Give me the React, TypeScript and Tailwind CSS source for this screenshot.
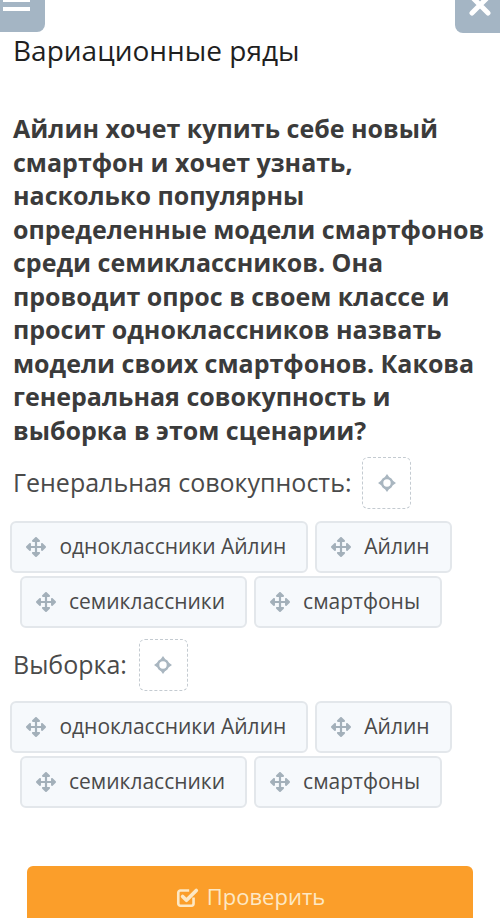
import { FaArrowsAlt } from 'react-icons/fa'

const options = ['одноклассники Айлин', 'Айлин', 'семиклассники', 'смартфоны']

function DropIcon() {
  return (
    <svg width="20" height="20" viewBox="0 0 20 20" className="text-[#a9b6c0]">
      <circle cx="10" cy="10" r="5" fill="none" stroke="currentColor" strokeWidth="2.6" />
      <path d="M10 1 L12.5 4.5 L7.5 4.5 Z M10 19 L12.5 15.5 L7.5 15.5 Z M1 10 L4.5 7.5 L4.5 12.5 Z M19 10 L15.5 7.5 L15.5 12.5 Z" fill="currentColor" />
    </svg>
  )
}

function CheckIcon() {
  return (
    <svg width="24" height="24" viewBox="0 0 22 22" fill="none" stroke="currentColor" className="mt-[5px]">
      <path d="M17 11.5 V17 a2 2 0 0 1 -2 2 H5 a2 2 0 0 1 -2 -2 V7 a2 2 0 0 1 2 -2 H13" strokeWidth="2.4" />
      <path d="M7 10.5 L10.5 14 L19.5 5" strokeWidth="3.4" strokeLinecap="round" strokeLinejoin="round" />
    </svg>
  )
}

function DropBox() {
  return (
    <div className="w-[49px] h-[52px] rounded-md border border-dashed border-[#c4cbd1] flex items-center justify-center">
      <DropIcon />
    </div>
  )
}

function Chip({ label }: { label: string }) {
  return (
    <div className="h-[52px] flex items-center gap-[13px] pl-[14px] pr-[20px] rounded-md border-2 border-[#e3e7eb] bg-[#f6f9fc]">
      <FaArrowsAlt className="text-[#a3b0ba] text-[20px]" />
      <span className="text-[21px] text-[#4a4a4a]">{label}</span>
    </div>
  )
}

function ChipGroup() {
  return (
    <div className="flex flex-wrap justify-center gap-x-[7px] gap-y-[3px] w-[462px]">
      {options.map((o) => (
        <Chip key={o} label={o} />
      ))}
    </div>
  )
}

export default function App() {
  return (
    <div className="relative w-[500px] h-[918px] bg-white overflow-hidden" style={{ fontFamily: '"Open Sans", sans-serif' }}>
      <div className="flex justify-between">
        <div className="w-[45px] h-[32px] bg-[#a4b5c4] rounded-br-lg overflow-hidden flex flex-col gap-[5px] pl-[3px]">
          <div className="w-[27px] h-[4px] bg-white -mt-[2px]" />
          <div className="w-[27px] h-[4px] bg-white" />
        </div>
        <div className="w-[45px] h-[33px] bg-[#a4b5c4] rounded-bl-lg overflow-hidden flex justify-center">
          <svg width="26" height="26" viewBox="0 0 26 26" className="-mt-[8px] ml-[5px]">
            <path d="M5 5 L21 21 M21 5 L5 21" stroke="white" strokeWidth="5" strokeLinecap="round" />
          </svg>
        </div>
      </div>

      <div className="px-[13px]">
        <h1 className="text-[28px] leading-[36px] text-[#1f1f1f] -mt-[1px]">Вариационные ряды</h1>

        <p className="mt-[44px] text-[25px] leading-[33.5px] font-bold text-[#3b3b3b]">
          Айлин хочет купить себе новый смартфон и хочет узнать, насколько популярны определенные модели смартфонов среди семиклассников. Она проводит опрос в своем классе и просит одноклассников назвать модели своих смартфонов. Какова генеральная совокупность и выборка в этом сценарии?
        </p>

        <div className="flex items-center gap-[11px] mt-[10px] mb-[12px]">
          <span className="text-[25px] text-[#4a4a4a]">Генеральная совокупность:</span>
          <DropBox />
        </div>
      </div>
      <ChipGroup />

      <div className="px-[13px] mt-[11px] mb-[10px]">
        <div className="flex items-center gap-[12px]">
          <span className="text-[25px] text-[#4a4a4a]">Выборка:</span>
          <DropBox />
        </div>
      </div>
      <ChipGroup />

      <div className="px-[27px] mt-[58px]">
        <button className="w-full h-[60px] bg-[#fb9e2a] rounded-t-md flex items-start justify-center pt-[14px] gap-[8px] text-[#fde8c4]">
          <CheckIcon />
          <span className="text-[22px]">Проверить</span>
        </button>
      </div>
    </div>
  )
}
